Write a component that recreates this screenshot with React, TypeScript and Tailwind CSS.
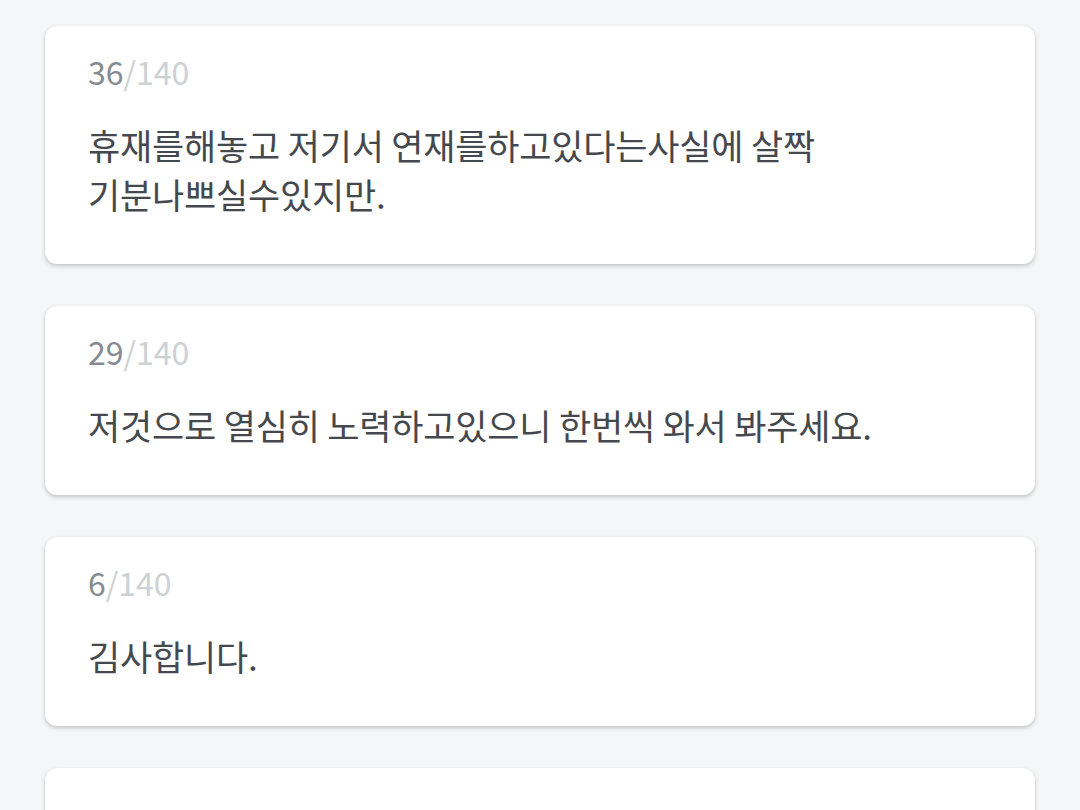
import React from "react";

const items = [
  { count: "36", text: ["휴재를해놓고 저기서 연재를하고있다는사실에 살짝", "기분나쁘실수있지만."] },
  { count: "29", text: ["저것으로 열심히 노력하고있으니 한번씩 와서 봐주세요."] },
  { count: "6", text: ["김사합니다."] },
];

export default function App() {
  return (
    <div
      className="w-[1080px] h-[810px] overflow-hidden bg-[#f4f6f7] px-[45px] pt-[26px] flex flex-col gap-[42px]"
      style={{ fontFamily: '"Noto Sans CJK KR", "Noto Sans", sans-serif' }}
    >
      {items.map((it, i) => (
        <div
          key={i}
          className="shrink-0 bg-white rounded-[12px] px-[43px] pt-[20px] pb-[46px] shadow-[0_2px_4px_rgba(0,0,0,0.2),0_0_1px_rgba(0,0,0,0.08)]"
        >
          <div className="text-[32px] leading-[50px] mb-[24px]">
            <span className="text-[#858b90]">{it.count}</span>
            <span className="text-[#cdd1d4]">/140</span>
          </div>
          <div className="text-[35px] leading-[49px] text-[#45494e] tracking-[-0.2px]">
            {it.text.map((t, j) => (
              <div key={j}>{t}</div>
            ))}
          </div>
        </div>
      ))}
      <div className="shrink-0 h-[200px] bg-white rounded-[12px] shadow-[0_2px_4px_rgba(0,0,0,0.2),0_0_1px_rgba(0,0,0,0.08)]" />
    </div>
  );
}
